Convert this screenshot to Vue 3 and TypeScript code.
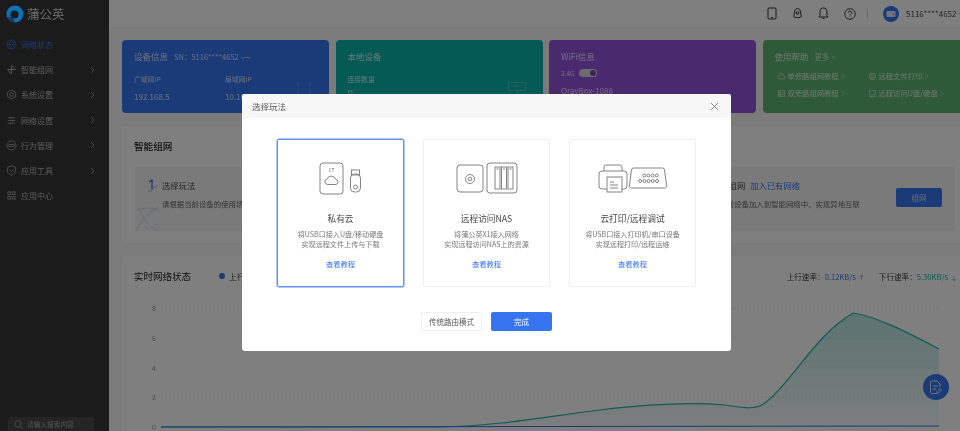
<script setup lang="ts">
interface NavItem {
  label: string
  d: string
  arrow: boolean
}

const nav: NavItem[] = [
  { label: '网络状态', arrow: false, d: 'M1 6a5 5 0 1 0 10 0a5 5 0 1 0 -10 0M1 6h10M6 1c-3 3 -3 7 0 10M6 1c3 3 3 7 0 10' },
  { label: '智能组网', arrow: true, d: 'M6 1v10M1 6h10M6 3.5a2 2 0 0 1 3 0a2 2 0 0 1 -3 2.5M6 8.5a2 2 0 0 1 -3 0a2 2 0 0 1 3 -2.5' },
  { label: '系统设置', arrow: true, d: 'M6 1l4.5 2.5v5L6 11l-4.5 -2.500v-5zM4 6a2 2 0 1 0 4 0a2 2 0 1 0 -4 0' },
  { label: '网络设置', arrow: true, d: 'M2 3h8M2 6h8M2 9h8M4.500 2v2M7.500 5v2M5 8v2' },
  { label: '行为管理', arrow: true, d: 'M1 6a5 5 0 1 0 10 0a5 5 0 1 0 -10 0M3.500 5h5a1 1 0 0 1 0 2h-5a1 1 0 0 1 0 -2' },
  { label: '应用工具', arrow: true, d: 'M6 1l4.500 1.500v4c0 2 -2 3.500 -4.500 4.500c-2.500 -1 -4.500 -2.500 -4.500 -4.500v-4zM4 5l2 2l2 -2' },
  { label: '应用中心', arrow: false, d: 'M2 2h3v3h-3zM7 2h3v3h-3zM2 7h3v3h-3zM7 7h3v3h-3z' },
]

const helpRows = [
  { label: '单旁路组网教程', d: 'M3 9a2 2 0 0 1 0 -4a3 3 0 0 1 6 0a2 2 0 0 1 0 4z' },
  { label: '远程文件打印', d: 'M3 4v-2h6v2M2 4h8v4h-8zM4 7h4v3h-4z' },
  { label: '双旁路组网教程', d: 'M2 2h8v8h-8zM2 5h8M2 7.500h8M4 2v8' },
  { label: '远程访问U盘/硬盘', d: 'M2 2h8v6h-8zM1 10h10' },
]
const gridY = [309, 338, 368, 397]
const axis = [
  { y: 311, t: '8' },
  { y: 341, t: '6' },
  { y: 371, t: '4' },
  { y: 400, t: '2' },
  { y: 430, t: '0' },
]
const downLine =
  'M161 427 L440 427 C500 426 550 416 600 410 C650 404 690 402 725 405 C745 408 755 410 765 403 C790 385 815 335 853 313 C875 316 905 331 939 349'
const downArea = downLine + ' L939 427 L161 427 Z'

const options = [
  { name: '私有云', lines: ['将USB口接入U盘/移动硬盘', '实现远程文件上传与下载'] },
  { name: '远程访问NAS', lines: ['将蒲公英X1接入网络', '实现远程访问NAS上的资源'] },
  { name: '云打印/远程调试', lines: ['将USB口接入打印机/串口设备', '实现远程打印/远程运维'] },
]
const selected = 0
</script>

<template>
  <div class="page">
    <aside class="side">
      <div class="logo">
        <svg class="mark" width="18" height="18" viewBox="0 0 18 18">
          <circle cx="9" cy="9" r="8.500" fill="#0f72b8" />
          <circle cx="8.500" cy="9.500" r="4" fill="#1b1b1b" />
          <path d="M1.500 12 L6 12 L9 17 C5 17.500 3 15 1.500 12z" fill="#0b3d66" />
        </svg>
        <span>蒲公英</span>
      </div>
      <nav class="nav">
        <div v-for="(item, i) in nav" :key="item.label" class="nav-item" :class="{ on: i === 0 }">
          <svg width="11" height="11" viewBox="0 0 12 12" fill="none" stroke="currentColor" stroke-width="0.8">
            <path :d="item.d" />
          </svg>
          <span>{{ item.label }}</span>
          <svg v-if="item.arrow" class="chev" width="5" height="8" viewBox="0 0 5 8" fill="none" stroke="currentColor" stroke-width="0.7">
            <path d="M1 1l3 3l-3 3" />
          </svg>
        </div>
      </nav>
      <div class="search">
        <svg width="9" height="9" viewBox="0 0 10 10" fill="none" stroke="#999" stroke-width="0.9">
          <circle cx="4.500" cy="4.500" r="3.500" />
          <path d="M7 7l2.500 2.500" />
        </svg>
        <span>请输入搜索内容</span>
      </div>
    </aside>

    <div class="content">
      <header class="top">
        <svg width="10" height="13" viewBox="0 0 10 13" fill="none" stroke="#333" stroke-width="1">
          <rect x="1" y="1" width="8" height="11" rx="1" />
          <path d="M4 10.500h2" />
        </svg>
        <svg width="11" height="13" viewBox="0 0 11 13" fill="none" stroke="#333" stroke-width="1">
          <path d="M2.500 6a3 4.500 0 0 1 6 0l1 3.500c-1 1.500 -7 1.500 -8 0z" />
          <circle cx="5.500" cy="6" r="1.300" />
        </svg>
        <svg width="11" height="13" viewBox="0 0 11 13" fill="none" stroke="#333" stroke-width="1">
          <path d="M1 10h9l-1 -1.500v-3.500a3 3.500 0 0 0 -7 0v3.500zM4.500 11.500h2" />
        </svg>
        <svg class="last-ico" width="12" height="12" viewBox="0 0 12 12" fill="none" stroke="#333" stroke-width="0.9">
          <circle cx="6" cy="6" r="5.300" />
          <path d="M4.300 4.700a1.700 1.700 0 1 1 2.400 1.600c-.5 .3 -.7 .6 -.7 1.200M6 8.500v.8" />
        </svg>
        <i class="sep"></i>
        <span class="avatar">
          <svg width="10" height="8" viewBox="0 0 10 8">
            <rect x="0.500" y="1" width="9" height="6" rx="1" fill="#dfe8f8" />
            <circle cx="7.500" cy="4" r="0.700" fill="#3674f0" />
          </svg>
        </span>
        <span class="user">5116****4652</span>
        <i class="caret"></i>
      </header>

      <main class="main">
        <section class="cards">
          <div class="card blue">
            <div class="card-title">
              设备信息<small>SN：5116****4652</small>
              <svg class="signal" width="10" height="4" viewBox="0 0 10 4" fill="none" stroke="currentColor" stroke-width="0.6">
                <path d="M0 1l2 2l2 -2l1 1l2 -1l1 2l2 -2" />
              </svg>
            </div>
            <div class="ip-row">
              <div>
                <p class="lab">广域网IP</p>
                <p class="val">192.168.5</p>
              </div>
              <div>
                <p class="lab">局域网IP</p>
                <p class="val">10.16.8.1</p>
              </div>
            </div>
            <svg class="deco deco-bars" width="14" height="12" viewBox="0 0 14 12" stroke="#fff" stroke-width="0.7">
              <path d="M1 0v12M13 0v12" />
            </svg>
          </div>
          <div class="card teal">
            <div class="card-title">本地设备</div>
            <p class="lab">连接数量</p>
            <p class="val big">0</p>
            <svg class="deco deco-screen" width="18" height="12" viewBox="0 0 18 12" fill="none" stroke="#fff" stroke-width="0.7">
              <path d="M.5 .5h17v8h-17zM9 8.500v3.500M5 4h6" />
            </svg>
          </div>
          <div class="card purple">
            <div class="card-title">WiFi信息</div>
            <div class="wifi"><span>2.4G</span><i class="toggle"></i></div>
            <p class="val">OrayBox-1088</p>
          </div>
          <div class="card green">
            <div class="card-title">使用帮助<small class="more">更多 &gt;</small></div>
            <div class="help">
              <div v-for="row in helpRows" :key="row.label" class="help-row">
                <svg width="9" height="9" viewBox="0 0 12 12" fill="none" stroke="currentColor" stroke-width="0.8">
                  <path :d="row.d" />
                </svg>
                <span>{{ row.label }}</span>
                <svg width="4" height="7" viewBox="0 0 5 8" fill="none" stroke="currentColor" stroke-width="0.6">
                  <path d="M1 1l3 3l-3 3" />
                </svg>
              </div>
            </div>
          </div>
        </section>

        <section class="panel mesh">
          <h3>智能组网</h3>
          <div class="steps">
            <svg class="wave" width="26" height="24" viewBox="0 0 26 24" fill="none" stroke="#c4d3ee" stroke-width="0.8">
              <path d="M1 4c8 -4 16 -4 24 0M1 24c5 -10 12 -18 22 -24M3 0c4 10 10 18 19 24" />
            </svg>
            <div class="step first">
              <svg class="num" width="12" height="13" viewBox="0 0 12 13" fill="none">
                <path d="M2 3l3 -2v9.500" stroke="#3674f0" stroke-width="1.300" />
                <path d="M6 9l5 -3M1 12h4" stroke="#7ba2f4" stroke-width="0.700" />
              </svg>
              <div>
                <div class="step-t">选择玩法</div>
                <div class="step-d">请根据当前设备的使用场景选择对应的玩法</div>
              </div>
            </div>
            <div class="step last">
              <div class="step-t">创建组网<a>加入已有网络</a></div>
              <div class="step-d">将当前设备加入到智能网络中，实现异地互联</div>
            </div>
            <button class="mesh-btn" type="button">组网</button>
          </div>
        </section>

        <section class="panel live">
          <div class="live-head">
            <h3>实时网络状态</h3>
            <span class="legend"><i></i>上行</span>
            <span class="rate first-rate">上行速率：<b>0.12KB/s</b><em>↑</em></span>
            <span class="rate">下行速率：<b class="down">5.30KB/s</b><em class="down">↓</em></span>
          </div>
          <svg class="chart" width="846" height="143" viewBox="122 288 846 143">
            <defs>
              <linearGradient id="fillDown" x1="0" y1="0" x2="0" y2="1">
                <stop offset="0" stop-color="#21b3a8" stop-opacity="0.32" />
                <stop offset="1" stop-color="#21b3a8" stop-opacity="0.03" />
              </linearGradient>
            </defs>
            <line v-for="y in gridY" :key="y" x1="161" x2="939" :y1="y" :y2="y" stroke="#ddd" stroke-width="0.7" stroke-dasharray="2 2" />
            <text v-for="a in axis" :key="a.t" x="154" :y="a.y" text-anchor="middle" class="tick">{{ a.t }}</text>
            <path :d="downArea" fill="url(#fillDown)" />
            <path :d="downLine" fill="none" stroke="#25b5aa" stroke-width="1.200" />
            <path d="M161 427 L939 426" fill="none" stroke="#3674f0" stroke-width="1" />
          </svg>
        </section>
      </main>
    </div>

    <button class="fab" type="button">
      <svg width="14" height="15" viewBox="0 0 14 15" fill="none" stroke="#dfe8f8" stroke-width="1">
        <path d="M11 7v-3l-3 -3h-5.500a1 1 0 0 0 -1 1v10.500a1 1 0 0 0 1 1h4.500M4 6h5M4 9h3M7.500 13.500l.500 -2l3 -3l1.500 1.500l-3 3z" />
      </svg>
    </button>

    <div class="mask">
      <div class="modal">
        <div class="modal-head">
          <span>选择玩法</span>
          <svg width="9" height="9" viewBox="0 0 9 9" stroke="#666" stroke-width="0.8">
            <path d="M1 1l7 7M8 1l-7 7" />
          </svg>
        </div>
        <div class="opts">
          <div v-for="(o, i) in options" :key="o.name" class="opt" :class="{ sel: i === selected }">
            <svg v-if="i === 0" class="pic" width="80" height="36" viewBox="301 162 80 36" fill="none" stroke="#777" stroke-width="0.900">
              <rect x="320" y="164" width="23" height="31" rx="3" />
              <text x="331.500" y="172.500" text-anchor="middle" class="pic-t">1T</text>
              <path d="M327.500 185.500a2.800 2.800 0 0 1 -.500 -5.500a4.500 4.500 0 0 1 8.500 .200a2.700 2.700 0 0 1 .500 5.300z" />
              <rect x="351.500" y="171" width="8" height="5" />
              <rect x="350.500" y="175" width="10" height="18" rx="4" />
              <circle cx="355.500" cy="188" r="2" />
            </svg>
            <svg v-else-if="i === 1" class="pic" width="80" height="36" viewBox="447 162 80 36" fill="none" stroke="#777" stroke-width="0.900">
              <rect x="457" y="166" width="26" height="27" rx="3" />
              <circle cx="470" cy="180" r="4.500" />
              <circle cx="470" cy="180" r="1.800" />
              <rect x="487" y="164" width="30" height="30" rx="3" />
              <rect x="495" y="168" width="5" height="22" />
              <rect x="501.500" y="168" width="5" height="22" />
              <rect x="508" y="168" width="5" height="22" />
              <path d="M496.500 170h2M503 170h2M509.500 170h2" />
            </svg>
            <svg v-else class="pic" width="80" height="36" viewBox="593 162 80 36" fill="none" stroke="#777" stroke-width="0.900">
              <path d="M604 172v-4a2 2 0 0 1 2 -2h14a2 2 0 0 1 2 2v4" />
              <path d="M607 190h-5a3 3 0 0 1 -3 -3v-12a3 3 0 0 1 3 -3h22a3 3 0 0 1 3 3v12a3 3 0 0 1 -3 3h-2" />
              <rect x="607" y="178" width="15" height="15" />
              <path d="M610 183h4M610 186h8M610 189h8" />
              <path d="M633.500 169h29a2 2 0 0 1 2 2l2 15a2 2 0 0 1 -2 3h-33a2 2 0 0 1 -2 -3l2 -15a2 2 0 0 1 2 -2z" />
              <circle v-for="n in 4" :key="'a' + n" :cx="640 + n * 4.200" cy="176.500" r="1.500" />
              <circle v-for="n in 5" :key="'b' + n" :cx="636 + n * 4.200" cy="182" r="1.500" />
            </svg>
            <div class="opt-name">{{ o.name }}</div>
            <p v-for="l in o.lines" :key="l" class="opt-line">{{ l }}</p>
            <a class="opt-link">查看教程</a>
          </div>
        </div>
        <div class="modal-foot">
          <button class="btn plain" type="button">传统路由模式</button>
          <button class="btn primary" type="button">完成</button>
        </div>
      </div>
    </div>
  </div>
</template>

<style>
html,
body {
  margin: 0;
  overflow: hidden;
  background: #7b7b7b;
}
</style>

<style scoped>
.page {
  position: relative;
  width: 960px;
  height: 431px;
  display: flex;
  overflow: hidden;
  font-family: "Noto Sans CJK SC", "Noto Sans", sans-serif;
  color: #333;
  background: #f6f6f6;
  filter: blur(0.4px);
}

p,
h3 {
  margin: 0;
  font-weight: 400;
}

.side {
  width: 109px;
  flex: none;
  background: #363636;
  display: flex;
  flex-direction: column;
  color: #b8b8b8;
}

.logo {
  height: 27px;
  padding-left: 6px;
  display: flex;
  align-items: center;
  gap: 3px;
  font-size: 12.500px;
  color: #d8d8d8;
}

/* the mark stays bright above the dialog mask */
.mark {
  position: relative;
  z-index: 1;
}

.nav {
  padding-top: 5px;
  flex: 1;
}

.nav-item {
  height: 25.200px;
  padding-left: 6px;
  display: flex;
  align-items: center;
  gap: 4px;
  font-size: 8px;
}

.nav-item.on {
  color: #3674f0;
}

.chev {
  margin-left: 33px;
}

.search {
  height: 14px;
  margin: 0 15px 0 8px;
  padding-left: 6px;
  display: flex;
  align-items: center;
  gap: 4px;
  font-size: 6.700px;
  color: #aaa;
  background: #4a4a4a;
  border-radius: 2px 2px 0 0;
}

.content {
  flex: 1;
  min-width: 0;
}

.top {
  height: 27px;
  background: #fff;
  display: flex;
  align-items: center;
  padding-left: 658px;
  width: 851px;
  box-sizing: border-box;
}

.top > svg {
  margin-right: 15px;
  flex: none;
}

.top > .last-ico {
  margin-right: 12px;
}

.sep {
  width: 1px;
  height: 9px;
  background: #ccc;
  margin: 0 15px 0 -1px;
  flex: none;
}

.avatar {
  width: 16px;
  height: 16px;
  border-radius: 50%;
  background: #3674f0;
  display: flex;
  align-items: center;
  justify-content: center;
  flex: none;
}

.user {
  margin-left: 7px;
  font-size: 8px;
  color: #444;
  white-space: nowrap;
}

.caret {
  margin-left: 3px;
  border: 2px solid transparent;
  border-top-color: #555;
  margin-top: 2px;
}

.main {
  padding: 13px 0 0 13px;
  width: 846px;
}

.cards {
  display: flex;
  gap: 6.500px;
}

.card {
  position: relative;
  width: 207px;
  height: 73px;
  flex: none;
  box-sizing: border-box;
  padding: 10px 12px 0;
  border-radius: 4px;
  color: rgba(255, 255, 255, 0.78);
  overflow: hidden;
}

.blue {
  background: #3674f0;
}

.teal {
  background: #0ab5aa;
}

.purple {
  background: #9455dc;
}

.green {
  background: #5fb472;
}

.card-title {
  font-size: 8.500px;
  line-height: 12px;
  white-space: nowrap;
}

.card-title small {
  margin-left: 6px;
  font-size: 7.500px;
}

.signal {
  margin-left: 2px;
}

.deco {
  position: absolute;
  opacity: 0.3;
}

.deco-bars {
  left: 175px;
  top: 42px;
}

.deco-screen {
  left: 172px;
  top: 42px;
}

.ip-row {
  display: flex;
  gap: 53px;
  margin-top: 11px;
}

.ip-row > div {
  width: 38px;
}

.lab {
  font-size: 6.800px;
  line-height: 10px;
  white-space: nowrap;
}

.teal .lab {
  margin-top: 12px;
}

.val {
  margin-top: 6.500px;
  font-size: 8px;
  line-height: 11px;
  white-space: nowrap;
}

.big {
  font-size: 10px;
  margin-top: 4px;
}

.wifi {
  display: flex;
  align-items: center;
  gap: 4px;
  margin-top: 7px;
  font-size: 6.500px;
  line-height: 8px;
}

.toggle {
  width: 18px;
  height: 8px;
  border-radius: 4px;
  background: #d6d6d6;
  position: relative;
}

.toggle::after {
  content: "";
  position: absolute;
  right: 1px;
  top: 1px;
  width: 6px;
  height: 6px;
  border-radius: 50%;
  background: #7b4bb8;
}

.purple .val {
  margin-top: 7.500px;
}

.more {
  margin-left: 6px;
  opacity: 0.8;
}

.help {
  display: grid;
  grid-template-columns: 91px 1fr;
  row-gap: 7px;
  margin-top: 8px;
  padding-left: 0;
}

.help-row {
  display: flex;
  align-items: center;
  gap: 2px;
  font-size: 7.300px;
  line-height: 10px;
  white-space: nowrap;
  padding-left: 2px;
}

.panel {
  margin-top: 13px;
  width: 846px;
  box-sizing: border-box;
  background: #fff;
  border-radius: 4px;
}

.mesh {
  height: 117px;
  padding: 13px 13px 0 12px;
}

.mesh h3 {
  font-size: 9.600px;
  line-height: 14px;
  font-weight: 500;
  color: #222;
}

.steps {
  position: relative;
  margin: 14px 0 0 1px;
  height: 64px;
  display: flex;
  align-items: flex-start;
  background: #f5f5f5;
  overflow: hidden;
}

.wave {
  position: absolute;
  left: 0;
  bottom: 0;
}

.step {
  font-size: 8px;
}

.step.first {
  display: flex;
  gap: 3px;
  width: 565px;
  padding: 12px 0 0 12px;
}

.num {
  flex: none;
}

.step.last {
  width: 184px;
  padding-top: 12px;
  flex: none;
}

.step-t {
  font-size: 8.300px;
  line-height: 12px;
  color: #444;
}

.step-t a {
  margin-left: 5px;
  color: #3674f0;
}

.step-d {
  margin-top: 7px;
  font-size: 7.400px;
  line-height: 11px;
  color: #666;
  white-space: nowrap;
}

.mesh-btn {
  width: 46px;
  height: 19px;
  margin-top: 21px;
  padding: 0;
  border: 0;
  border-radius: 2px;
  background: #3674f0;
  color: #ddd;
  font: inherit;
  font-size: 7.500px;
}

.live {
  height: 200px;
  position: relative;
}

.live-head {
  padding: 14px 11px 0 12px;
  display: flex;
  align-items: center;
  height: 12px;
  margin-bottom: 6px;
  white-space: nowrap;
}

.live-head h3 {
  font-size: 9.500px;
  color: #222;
  width: 85px;
}

.legend {
  display: flex;
  align-items: center;
  gap: 4px;
  font-size: 8px;
  color: #444;
}

.legend i {
  width: 6px;
  height: 6px;
  border-radius: 50%;
  background: #3674f0;
}

.rate {
  font-size: 7.600px;
  color: #444;
  margin-left: 14px;
}

.first-rate {
  margin-left: auto;
}

.rate b {
  font-weight: 400;
  color: #3674f0;
}

.rate em {
  margin-left: 3px;
  font-size: 6px;
  font-style: normal;
  color: #3674f0;
}

.rate .down {
  color: #0ab5aa;
}

.chart {
  display: block;
}

.tick {
  font-size: 7px;
  fill: #999;
}

.fab {
  position: absolute;
  left: 923px;
  top: 374px;
  width: 26px;
  height: 26px;
  padding: 0;
  border: 0;
  border-radius: 50%;
  background: #3674f0;
  display: flex;
  align-items: center;
  justify-content: center;
}

.mask {
  position: absolute;
  inset: 0;
  padding: 94px 0 0 13px;
  display: flex;
  justify-content: center;
  align-items: flex-start;
  background: rgba(0, 0, 0, 0.5);
}

.modal {
  width: 489px;
  height: 257px;
  background: #fff;
  border-radius: 3px;
  overflow: hidden;
}

.modal-head {
  height: 24px;
  padding: 0 12px 0 10px;
  display: flex;
  align-items: center;
  justify-content: space-between;
  background: #f7f7f7;
  font-size: 8.500px;
  color: #555;
}

.opts {
  display: flex;
  justify-content: center;
  gap: 19px;
  margin-top: 21px;
}

.opt {
  width: 127px;
  height: 148px;
  box-sizing: border-box;
  border: 1px solid #eee;
  border-radius: 2px;
  padding-top: 21px;
  text-align: center;
}

.opt.sel {
  border-color: #5f92f4;
  box-shadow: 0 0 0 0.5px #5f92f4;
}

.pic {
  display: block;
  margin: 0 auto;
}

.pic-t {
  font-size: 5px;
  fill: #666;
  stroke: none;
}

.opt-name {
  margin-top: 15px;
  font-size: 8.700px;
  line-height: 14px;
  color: #444;
}

.opt-line {
  font-size: 7.100px;
  line-height: 10px;
  color: #777;
}

.opt-name + .opt-line {
  margin-top: 3px;
}

.opt-link {
  display: block;
  margin-top: 10px;
  font-size: 7.300px;
  line-height: 10px;
  color: #3674f0;
}

.modal-foot {
  display: flex;
  justify-content: center;
  gap: 9px;
  margin-top: 25px;
}

.btn {
  width: 61px;
  height: 19px;
  padding: 0;
  border-radius: 2px;
  font: inherit;
  font-size: 7.500px;
}

.plain {
  border: 1px solid #eee;
  background: #fff;
  color: #555;
}

.primary {
  border: 0;
  background: #3674f0;
  color: #fff;
}
</style>
